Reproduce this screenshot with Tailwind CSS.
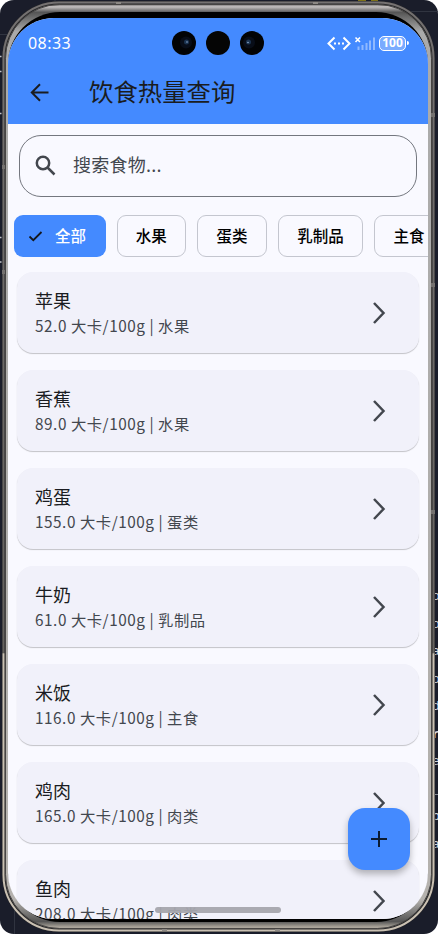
<!DOCTYPE html>
<html lang="zh-CN">
<head>
    <meta charset="UTF-8">
    <meta name="viewport" content="width=device-width, initial-scale=1.0">
    <title>饮食热量查询</title>
    <script src="https://cdn.jsdelivr.net/npm/@tailwindcss/browser@4"></script>
</head>
<body class="bg-white font-['Noto_Sans_CJK_SC',sans-serif]">

    <div class="relative w-[438px] h-[934px] overflow-hidden rounded-[14px] bg-[#1a1d2a] pt-[18px] pl-2">

        <!-- Editor text behind the phone -->
        <div class="absolute left-[432px] top-[583px] font-['Liberation_Mono',monospace] text-[13px] leading-[27.5px] text-gray-300">
            <p>o</p><p>o</p><p>a</p><p>o</p><p>d</p><p class="font-bold">r</p><p>e</p><p>_</p><p>b</p><p>a</p>
        </div>

        <!-- Phone frame -->
        <svg class="absolute left-0 top-0" width="438" height="934" viewBox="0 0 438 934" fill="none">
            <defs>
                <linearGradient id="metal" x1="0" y1="0" x2="0" y2="934" gradientUnits="userSpaceOnUse">
                    <stop offset="0" stop-color="#777373"/>
                    <stop offset="0.012" stop-color="#737070"/>
                    <stop offset="0.699" stop-color="#65625f"/>
                    <stop offset="0.7" stop-color="#c9c0b2"/>
                    <stop offset="1" stop-color="#c9c0b2"/>
                </linearGradient>
                <linearGradient id="rim" x1="0" y1="4" x2="0" y2="927" gradientUnits="userSpaceOnUse">
                    <stop offset="0" stop-color="#6b6868"/>
                    <stop offset="0.003" stop-color="#c4c0c0"/>
                    <stop offset="0.009" stop-color="#555"/>
                    <stop offset="0.03" stop-color="#aaa"/>
                    <stop offset="0.97" stop-color="#b5b2ae"/>
                    <stop offset="0.994" stop-color="#555"/>
                    <stop offset="1" stop-color="#aaa49a"/>
                </linearGradient>
            </defs>
            <path d="M0 34.500H28M410 11.500H438M14.500 906V934M55 0V12" stroke="#303440"/>
            <path d="M358 .5h8M371 .5h7" stroke="#7d7118"/>
            <path d="M0 113.500h1.500M0 237.500h1.500M0 262h1.500M0 56.500h1.500M0 71.500h1.500" stroke="#c5c7cc" stroke-width="1.500"/>
            <rect x="2" y="1" width="433" height="931" rx="57" fill="#29292b"/>
            <rect x="3.500" y="2.500" width="430" height="928" rx="55.500" stroke="url(#metal)" stroke-width="2"/>
            <rect x="5.500" y="4.500" width="426" height="924" rx="54" fill="url(#rim)" stroke="#464443"/>
            <rect x="8" y="12" width="420" height="910" rx="52" fill="#000"/>
            <path d="M116 3h5M313 3h5M162 930h5M275 930h5" stroke="#8d8985" stroke-width="2"/>
            <path d="M2 167h3M2 272h3M431 115h4M431 285h4M431 512h4" stroke="#74716f" stroke-width="4"/>
        </svg>

        <div class="relative flex h-[901px] w-[420px] flex-col overflow-hidden rounded-[46px] bg-[#f9f9ff] text-[#1a1c21]">

            <header class="h-[105.500px] shrink-0 bg-[#448aff]">
                <!-- Status bar -->
                <div class="grid h-[50px] grid-cols-3 items-center pl-5 pr-[19.500px] text-white">
                    <span class="font-['Noto_Sans',sans-serif] text-base leading-none tracking-[0.450px]">08:33</span>
                    <svg class="justify-self-center" width="92" height="24" viewBox="0 0 92 24">
                        <circle cx="12" cy="12" r="12" fill="#020305"/>
                        <circle cx="46" cy="12" r="12" fill="#050505"/>
                        <circle cx="80" cy="12" r="12" fill="#020305"/>
                        <g fill="#080d18"><circle cx="14" cy="11.500" r="6"/><circle cx="77" cy="11.500" r="6"/></g>
                        <g fill="#1b3350"><circle cx="14.500" cy="11" r="2.500"/><circle cx="76.500" cy="11" r="2.500"/></g>
                        <g fill="#a8c4e8"><circle cx="15" cy="11" r=".7"/><circle cx="76" cy="11.500" r=".7"/></g>
                    </svg>
                    <div class="flex items-center justify-self-end">
                        <svg width="52" height="18" viewBox="0 0 52 18" fill="none">
                            <path d="M8.500 3.500 2.500 9.500l6 6M17.500 3.500l6 6-6 6" stroke="#fff" stroke-width="2"/>
                            <path d="M8 9.500h2M12 9.500h2M16 9.500h2" stroke="#fff" stroke-width="2"/>
                            <path d="m29.500 3.500 4.500 4.500m0-4.500-4.500 4.500" stroke="#fff" stroke-width="1.600"/>
                            <path d="M32.500 16v-3.500M36.500 16v-5M40.500 16V9M44 16V6.500M48 16V3.500" stroke="#8fb9ff" stroke-width="2"/>
                        </svg>
                        <span class="ml-[1.500px] flex h-[15px] w-[27px] items-center justify-center rounded-[5px] border border-white bg-[#79abff] font-['Noto_Sans',sans-serif] text-[12px] font-bold leading-none">100</span>
                        <span class="ml-px h-1 w-[1.500px] rounded-r bg-white"></span>
                    </div>
                </div>
                <!-- App bar -->
                <div class="flex h-12 items-center pl-[20px]">
                    <svg width="24" height="24" viewBox="0 0 24 24" fill="none" stroke="#1a1c21" stroke-width="2">
                        <path d="M20.500 12.500H4M12 4.200l-8.200 8.300 8.200 8.300"/>
                    </svg>
                    <h1 class="-mt-0.5 ml-[37px] text-[24.400px] leading-none">饮食热量查询</h1>
                </div>
            </header>

            <main class="flex min-h-0 flex-1 flex-col">
                <div class="ml-[11px] mt-[11px] flex h-[62px] w-[398px] shrink-0 items-center rounded-[22px] border border-[#74777f] pl-[14px] text-[#43474e]">
                    <svg width="24" height="24" viewBox="0 0 24 24" fill="none" stroke="currentColor" stroke-width="2.500">
                        <circle cx="9" cy="9" r="6.200"/>
                        <path d="m13.500 13.500 7 7"/>
                    </svg>
                    <span class="-mt-[3px] ml-[15px] text-[18px] leading-none tracking-[0.250px]">搜索食物...</span>
                </div>

                <!-- Category chips -->
                <div class="ml-[5.500px] mt-[18px] flex shrink-0 gap-[11px] text-[15.500px] font-medium leading-none text-black *:flex *:h-[42px] *:shrink-0 *:items-center *:rounded-[9px]">
                    <button class="w-[92px] bg-[#448aff] pl-[14px] text-white">
                        <svg width="16" height="14" viewBox="0 0 16 14" fill="none" stroke="#14171d" stroke-width="1.800"><path d="m1.500 7.500 3.800 3.700L13.500 3"/></svg>
                        <span class="ml-[11.500px]">全部</span>
                    </button>
                    <button class="w-[69.500px] justify-center border border-[#c4c6cf]">水果</button>
                    <button class="w-[70px] justify-center border border-[#c4c6cf]">蛋类</button>
                    <button class="w-[85px] justify-center border border-[#c4c6cf]">乳制品</button>
                    <button class="w-[70px] justify-center border border-[#c4c6cf]">主食</button>
                </div>

                <ul id="foodList" class="mt-[15px] flex flex-col gap-[17px] pl-[9px]"></ul>
            </main>

            <!-- Add button -->
            <button class="absolute left-[339.500px] top-[790px] flex size-[62px] items-center justify-center rounded-[17px] bg-[#448aff] shadow-[0_4px_7px_rgba(0,0,0,0.28)]">
                <svg width="18" height="18" viewBox="0 0 18 18" stroke="#0b1b33" stroke-width="2"><path d="M9 1v16M1 9h16"/></svg>
            </button>
            <div class="absolute left-[147px] top-[889px] h-[5.500px] w-[126px] rounded-full bg-[#a5a5ad]/95"></div>
        </div>
    </div>

    <script>
        const foods = [
            ['苹果', '52.0', '水果'],
            ['香蕉', '89.0', '水果'],
            ['鸡蛋', '155.0', '蛋类'],
            ['牛奶', '61.0', '乳制品'],
            ['米饭', '116.0', '主食'],
            ['鸡肉', '165.0', '肉类'],
            ['鱼肉', '208.0', '肉类']
        ];

        document.getElementById('foodList').innerHTML = foods.map(([name, kcal, type]) => `
            <li class="flex h-[81px] w-[402px] shrink-0 items-center justify-between rounded-2xl bg-[#f1f1fa] pl-[18px] pr-[32px] shadow-[0_1px_1px_rgba(0,0,0,0.22)]">
                <div>
                    <p class="text-[18px] leading-[26px]">${name}</p>
                    <p class="text-[15.300px] leading-[25px] tracking-[0.550px] text-[#43474e]">${kcal} 大卡/100g | ${type}</p>
                </div>
                <svg class="mt-0.5" width="16" height="24" viewBox="0 0 16 24" fill="none" stroke="#43474e" stroke-width="2.500"><path d="m3 2 9.500 10L3 22"/></svg>
            </li>`).join('');
    </script>
</body>
</html>
